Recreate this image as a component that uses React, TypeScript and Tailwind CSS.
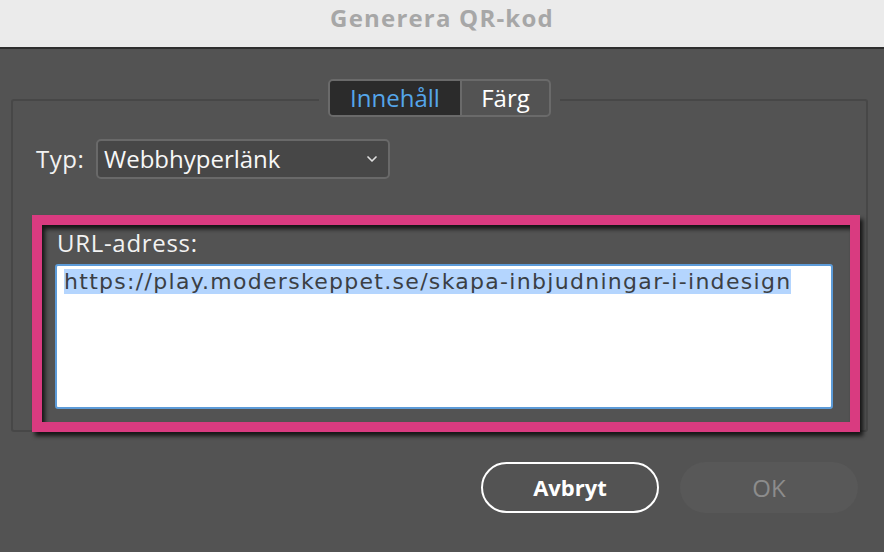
import { ChevronDown } from 'lucide-react';

const font = { fontFamily: '"Open Sans", "Liberation Sans", sans-serif' };
const urlFont = { fontFamily: '"DejaVu Sans", Verdana, sans-serif' };

export default function App() {
  return (
    <div className="relative w-[884px] h-[552px] overflow-hidden bg-[#535353]" style={font}>
      {/* Titelrad */}
      <div className="h-[49px] bg-[#ebebeb] border-b-2 border-[#2e2e2e] flex items-center justify-center pb-[11px]">
        <span className="text-[24px] leading-[30px] font-bold text-[#a7a7a7] tracking-[1.2px]">Generera QR-kod</span>
      </div>

      {/* Gruppruta */}
      <div className="ml-[11px] mr-[16px] mt-[50px] h-[333px] border-2 border-[#474747] rounded-[3px] flex flex-col">
        {/* Flikar */}
        <div className="-mt-[22px] flex justify-center">
          <div className="px-[9px] bg-[#535353]">
            <div className="flex h-[38px] border-2 border-[#6a6a6a] rounded-[5px] overflow-hidden">
              <div className="w-[130px] bg-[#2b2b2b] flex items-center justify-center text-[24px] text-[#55a6ea]">
                Innehåll
              </div>
              <div className="w-[89px] border-l-2 border-[#6a6a6a] flex items-center justify-center text-[24px] text-white">
                Färg
              </div>
            </div>
          </div>
        </div>

        {/* Typ */}
        <div className="mt-[22px] ml-[23px] flex items-center gap-[10px]">
          <span className="w-[50px] text-[24px] text-[#f2f2f2] tracking-[0.5px]">Typ:</span>
          <div className="w-[294px] h-[40px] bg-[#474747] border-2 border-[#696969] rounded-[5px] flex items-center justify-between pl-[6px] pr-[8px]">
            <span className="text-[24px] text-[#f7f7f7]">Webbhyperlänk</span>
            <ChevronDown size={16} strokeWidth={2.5} className="text-[#e0e0e0]" />
          </div>
        </div>

        {/* URL */}
        <div className="mt-[49px] ml-[42px] mr-[33px] flex flex-col">
          <span className="text-[24px] leading-[30px] text-[#f2f2f2] pl-[2px] tracking-[0.7px]">URL-adress:</span>
          <div className="mt-[6px] h-[145px] bg-white border-2 border-[#5d9bd8] rounded-[3px] pl-[7px] pt-[1px]">
            <span className="bg-[#b4d5fe] text-[22px] leading-[30px] text-[#3b3f45] tracking-[1.3px]" style={urlFont}>
              https://play.moderskeppet.se/skapa-inbjudningar-i-indesign
            </span>
          </div>
        </div>
      </div>

      {/* Knappar */}
      <div className="mt-[30px] mr-[26px] flex justify-end gap-[21px]">
        <button className="w-[178px] h-[51px] rounded-full border-2 border-white text-[22px] font-bold text-white">
          Avbryt
        </button>
        <button className="w-[178px] h-[51px] rounded-full bg-[#585858] text-[24px] text-[#8c8c8c]">
          OK
        </button>
      </div>

      {/* Rosa markering ovanpå */}
      <div className="absolute left-[32px] top-[215px] w-[828px] h-[217px] border-[10px] border-[#d93b80] drop-shadow-[3px_4px_2px_rgba(0,0,0,0.75)]" />
    </div>
  );
}
